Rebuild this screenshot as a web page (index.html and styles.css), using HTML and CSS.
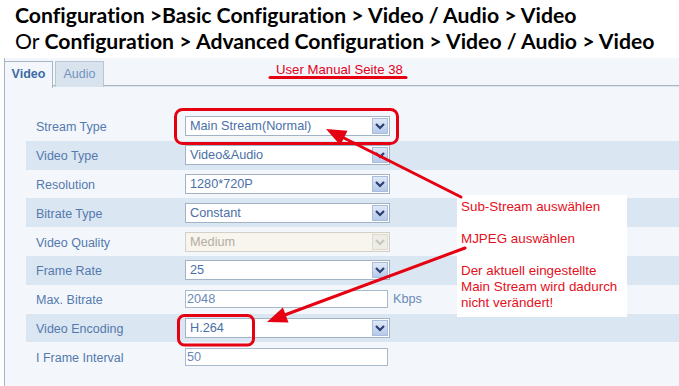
FILE: index.html
```html
<!doctype html>
<html>
<head>
<meta charset="utf-8">
<title>Video Einstellungen</title>
<link rel="stylesheet" href="styles.css">
</head>
<body>
<div class="crumbs">
  <p><b>Configuration &gt;Basic Configuration &gt; Video / Audio &gt; Video</b></p>
  <p>Or <b>Configuration &gt; Advanced Configuration &gt; Video / Audio &gt; Video</b></p>
</div>

<div class="panel">
  <div class="tabs">
    <div class="tab on">Video</div>
    <div class="tab">Audio</div>
  </div>
  <div class="form">
    <div class="row"><span class="lbl">Stream Type</span><div class="sel"><span>Main Stream(Normal)</span><i class="dd"><svg viewBox="0 0 14 14"><path d="M3 5 L7 9 L11 5"/></svg></i></div></div>
    <div class="row alt"><span class="lbl">Video Type</span><div class="sel"><span>Video&amp;Audio</span><i class="dd"><svg viewBox="0 0 14 14"><path d="M3 5 L7 9 L11 5"/></svg></i></div></div>
    <div class="row"><span class="lbl">Resolution</span><div class="sel"><span>1280*720P</span><i class="dd"><svg viewBox="0 0 14 14"><path d="M3 5 L7 9 L11 5"/></svg></i></div></div>
    <div class="row alt"><span class="lbl">Bitrate Type</span><div class="sel"><span>Constant</span><i class="dd"><svg viewBox="0 0 14 14"><path d="M3 5 L7 9 L11 5"/></svg></i></div></div>
    <div class="row"><span class="lbl">Video Quality</span><div class="sel off"><span>Medium</span><i class="dd"><svg viewBox="0 0 14 14"><path d="M3 5 L7 9 L11 5"/></svg></i></div></div>
    <div class="row alt"><span class="lbl">Frame Rate</span><div class="sel"><span>25</span><i class="dd"><svg viewBox="0 0 14 14"><path d="M3 5 L7 9 L11 5"/></svg></i></div></div>
    <div class="row"><span class="lbl">Max. Bitrate</span><div class="inp">2048</div><span class="unit">Kbps</span></div>
    <div class="row alt"><span class="lbl">Video Encoding</span><div class="sel"><span>H.264</span><i class="dd"><svg viewBox="0 0 14 14"><path d="M3 5 L7 9 L11 5"/></svg></i></div></div>
    <div class="row"><span class="lbl">I Frame Interval</span><div class="inp">50</div></div>
  </div>
</div>

<!-- roter Hinweis ueber dem Screenshot -->
<div class="manual">User Manual Seite 38</div>
<div class="note">
  <p>Sub-Stream auswählen</p>
  <p>MJPEG auswählen</p>
  <p>Der aktuell eingestellte<br>Main Stream wird dadurch<br>nicht verändert!</p>
</div>
<svg class="marks" width="679" height="386" viewBox="0 0 679 386">
  <line class="ln" x1="270" y1="77.5" x2="406" y2="77.5"/>
  <rect class="box" x="175.5" y="109.5" width="222" height="34" rx="7"/>
  <rect class="box" x="178.5" y="315.5" width="75" height="29.5" rx="6"/>
  <line class="ln" x1="461" y1="197" x2="340" y2="136"/>
  <polygon class="head" points="326,129 340.3,145.2 347.5,130.8"/>
  <line class="ln" x1="465" y1="248" x2="282" y2="316"/>
  <polygon class="head" points="267,322 288.5,322.5 282.9,307.5"/>
</svg>
</body>
</html>
```

FILE: styles.css
```css
*{margin:0;padding:0;box-sizing:border-box}
body{position:relative;width:679px;height:386px;overflow:hidden;background:#fff;font-family:"Liberation Sans",Arial,sans-serif;}
.crumbs{height:58px;padding:2px 0 0 15px;font-family:Lato,"Liberation Sans",sans-serif;font-size:21.2px;line-height:26px;color:#000;white-space:nowrap;font-variant-ligatures:none;}
.crumbs b{font-weight:bold}

.panel{height:328px;margin-left:4px;border-left:1px solid #a9b5c1;background:#f3f7fc;}
.tabs{display:flex;gap:2px;height:28px;padding-top:2px;border-bottom:1px solid #a8b5c2;box-shadow:0 1px 0 #dde5ee;}
.tab{width:49px;height:26px;margin-top:1px;border:1px solid #b9c6d3;border-bottom:0;background:#d9e3ee;color:#7194c0;font-size:12.5px;line-height:25px;text-align:center;}
.tab.on{width:48px;height:27px;margin-top:0;background:#f3f7fc;color:#3d6aa5;font-weight:bold;border-color:#a9b5c1;position:relative;top:1px;border-left:0}

.form{padding:26px 0 0 21px;}
.row{display:flex;align-items:center;height:28.8px;}
.row.alt{background:#dbe6f3;}
.lbl{width:159px;padding:2px 0 0 10px;font-size:12.5px;color:#5479ad;}
.sel{display:flex;align-items:center;justify-content:space-between;width:205px;height:20px;border:1px solid #a3b3c6;background:#fff;padding:0 1px 0 4px;font-size:12.7px;color:#4a70a8;}
.dd{display:block;width:16px;height:16px;border:1px solid #a9bcdc;background:linear-gradient(#e0e9f8,#b6c9ea);}
.dd svg{display:block;width:14px;height:14px;fill:none;stroke:#2a3d70;stroke-width:2.2;}
.sel.off{background:#f7f5ee;border-color:#d3d1c6;color:#b5ada0;}
.sel.off .dd{background:#eeece6;border-color:#dcdad2}
.sel.off .dd svg{stroke:#c9c6bf}
.inp{width:203px;height:18px;border:1px solid #a9b9cc;background:#fff;padding-left:1px;font-size:12.7px;line-height:16px;color:#6a89b6;}
.unit{margin-left:5px;font-size:12.7px;color:#6a89b6;}

.manual{position:absolute;left:276px;top:62px;font-size:13.2px;color:#e2001a;}
.note{position:absolute;left:457px;top:195px;width:170px;height:122px;padding:4px 0 0 4px;background:#fff;font-size:13.4px;line-height:16px;color:#e4101e;}
.note p{margin-bottom:16px}
.marks{position:absolute;left:0;top:0;}
.marks .ln{stroke:#e50012;stroke-width:3;stroke-linecap:round;}
.marks .box{fill:none;stroke:#e50012;stroke-width:3;}
.marks .head{fill:#e50012;}
```
